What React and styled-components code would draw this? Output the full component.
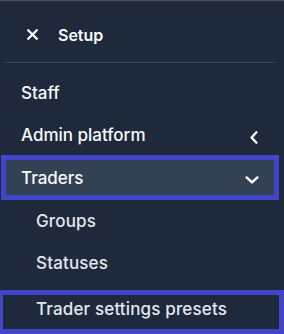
import React from 'react';
import styled, {createGlobalStyle} from 'styled-components';

const GlobalStyle = createGlobalStyle`
  html, body {
    margin: 0;
    padding: 0;
    background: #1e293b;
  }
  body {
    font-family: Inter, "Noto Sans", sans-serif;
    -webkit-font-smoothing: antialiased;
  }
`;

const Sidebar = styled.nav`
  width: 284px;
  height: 334px;
  overflow: hidden;
  background: #1e293b;
  border-top: 1px solid #4d5055;
  box-sizing: border-box;
`;

const Header = styled.div`
  height: 61px;
  padding: 6px 0 0 27px;
  box-sizing: border-box;
  display: flex;
  align-items: center;
  gap: 20px;
  color: #f8fafc;
  font-size: 16px;
  font-weight: 600;
`;

const Divider = styled.div`
  height: 1px;
  width: 270px;
  margin-left: 5px;
  background: #3b4557;
`;

const List = styled.ul`
  list-style: none;
  margin: 0;
  padding: 8px 0 0;
`;

// top level entries
const Item = styled.li`
  height: ${p => p.$h || 43}px;
  box-sizing: border-box;
  display: flex;
  align-items: center;
  justify-content: space-between;
  padding: 0 26px 0 21px;
  color: #f8fafc;
  font-size: 17px;
  font-weight: 500;
`;

const ActiveItem = styled(Item)`
  width: 278px;
  height: 45px;
  margin-left: 1px;
  padding: 0 15px 0 15px;
  background: #334155;
  border: 5px solid #4245c9;
`;

const SubItem = styled.li`
  height: 42px;
  display: flex;
  align-items: center;
  padding-left: 36px;
  color: #e2e8f0;
  font-size: 17px;
  font-weight: 500;
  letter-spacing: 0.15px;
`;

const SelectedSub = styled(SubItem)`
  height: 44px;
  margin-top: 6px;
  box-sizing: border-box;
  padding: 0 0 7px 33px;
  border: 5px solid #4245c9;
  border-left-width: 3px;
`;

const Icon = styled.svg`
  flex: none;
  margin-top: ${p => p.$mt || 0}px;
`;

const CloseIcon = () => (
  <Icon width="11" height="11" viewBox="0 0 11 11">
    <path d="M1.2 1.2 L9.8 9.8 M9.8 1.2 L1.2 9.8" stroke="#f8fafc" strokeWidth="2.3" strokeLinecap="round"/>
  </Icon>
);

const ChevronLeft = () => (
  <Icon width="8" height="13" viewBox="0 0 8 13" $mt={5}>
    <path d="M6.4 1.3 L1.6 6.5 L6.4 11.7" fill="none" stroke="#f8fafc" strokeWidth="2.4" strokeLinecap="round" strokeLinejoin="round"/>
  </Icon>
);

const ChevronDown = () => (
  <Icon width="14" height="8" viewBox="0 0 14 8" $mt={4}>
    <path d="M1.6 1.4 L7 6.4 L12.4 1.4" fill="none" stroke="#f8fafc" strokeWidth="2.4" strokeLinecap="round" strokeLinejoin="round"/>
  </Icon>
);

export default function App() {
    return (
        <Sidebar>
            <GlobalStyle/>
            <Header>
                <CloseIcon/>
                <span>Setup</span>
            </Header>
            <Divider/>
            <List>
                <Item>Staff</Item>
                <Item $h={41}>
                    Admin platform
                    <ChevronLeft/>
                </Item>
                <ActiveItem>
                    Traders
                    <ChevronDown/>
                </ActiveItem>
                <SubItem>Groups</SubItem>
                <SubItem>Statuses</SubItem>
                <SelectedSub>Trader settings presets</SelectedSub>
            </List>
        </Sidebar>
    );
}
